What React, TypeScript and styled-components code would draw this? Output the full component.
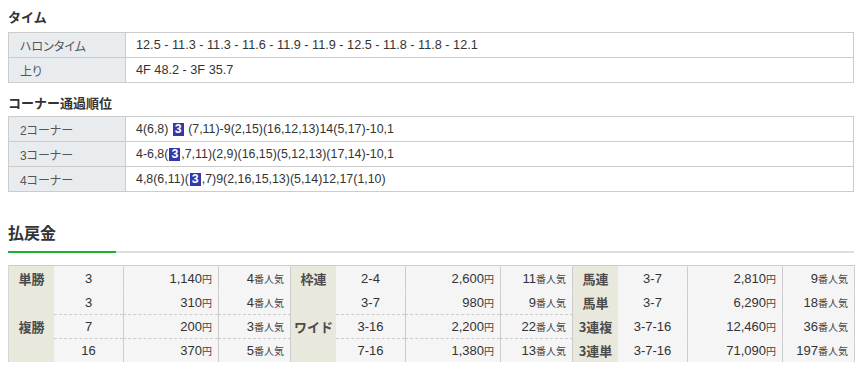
import styled, { createGlobalStyle } from "styled-components";

const GlobalStyle = createGlobalStyle`
  body {
    margin: 0;
    background: #fff;
    color: #333;
    font-family: "Liberation Sans", "Noto Sans CJK JP", sans-serif;
  }
`;

const Page = styled.div`
  width: 846px;
  padding: 8px 0 0 8px;
`;

const SectionTitle = styled.h3<{ $top?: number; $gap?: number }>`
  margin: ${(p) => p.$top ?? 0}px 0 ${(p) => p.$gap ?? 4}px;
  font-size: 13px;
  line-height: 20px;
  font-weight: bold;
  color: #333;
`;

const InfoTable = styled.table`
  width: 100%;
  border-collapse: collapse;
  table-layout: fixed;
  font-size: 12px;
`;

const InfoLabel = styled.th`
  width: 105px;
  height: 24px;
  padding: 0 0 0 11px;
  background: #e9ecef;
  border: 1px solid #ccc;
  text-align: left;
  font-weight: normal;
  color: #555;
  font-feature-settings: "palt";
`;

const InfoValue = styled.td<{ $size: number }>`
  height: 24px;
  padding: 0 0 0 10px;
  border: 1px solid #ccc;
  color: #333;
  font-size: ${(p) => p.$size}px;
  white-space: nowrap;
`;

const Badge = styled.span`
  display: inline-block;
  padding: 0 2px;
  margin: 0 1px;
  line-height: 13px;
  background: #3637a8;
  color: #fff;
  font-weight: bold;
`;

const PayTitle = styled.h2`
  margin: 31px 0 0;
  padding-bottom: 6px;
  font-size: 16px;
  line-height: 22px;
  font-weight: bold;
  color: #333;
`;

const Rule = styled.div`
  display: flex;
  height: 2px;
  background: #dedede;
`;

const RuleAccent = styled.div`
  width: 108px;
  background: #19b32b;
`;

const PayGrid = styled.div`
  display: grid;
  grid-template-columns: repeat(3, 1fr);
  margin-top: 12px;
  border-left: 1px solid #d6d6d6;
`;

const PayTable = styled.table`
  width: 100%;
  table-layout: fixed;
  border-collapse: separate;
  border-spacing: 0;
  border-top: 1px solid #ccc;
  font-size: 13px;
`;

const PayLabel = styled.th`
  padding: 0;
  background: #e8e8dd;
  border-top: 1px solid transparent;
  color: #4b4b4b;
  font-weight: bold;
  font-size: 13px;
  text-align: center;
  vertical-align: middle;
  font-family: "Noto Sans CJK JP", sans-serif;
`;

const PayCell = styled.td<{ $dashed?: boolean; $align: "center" | "right"; $line?: boolean; $last?: boolean }>`
  height: 23px;
  padding: 0 ${(p) => (p.$align === "right" ? 6 : 0)}px 0 0;
  background: #f5f5f5;
  border-top: 1px ${(p) => (p.$dashed ? "dashed #ccc" : "solid transparent")};
  border-left: ${(p) => (p.$line ? "1px solid #ccc" : "none")};
  border-right: ${(p) => (p.$last ? "1px solid #ccc" : "none")};
  text-align: ${(p) => p.$align};
  color: #333;
  white-space: nowrap;
`;

const Unit = styled.span`
  font-size: 10px;
  font-family: "Noto Sans CJK JP", sans-serif;
  color: #444;
`;

type PayRow = {
  label?: string;
  span?: number;
  num: string;
  yen: string;
  ninki: string;
  dashed?: boolean;
};

const payTables: PayRow[][] = [
  [
    { label: "単勝", num: "3", yen: "1,140", ninki: "4" },
    { label: "複勝", span: 3, num: "3", yen: "310", ninki: "4" },
    { num: "7", yen: "200", ninki: "3", dashed: true },
    { num: "16", yen: "370", ninki: "5", dashed: true },
  ],
  [
    { label: "枠連", num: "2-4", yen: "2,600", ninki: "11" },
    { label: "ワイド", span: 3, num: "3-7", yen: "980", ninki: "9" },
    { num: "3-16", yen: "2,200", ninki: "22", dashed: true },
    { num: "7-16", yen: "1,380", ninki: "13", dashed: true },
  ],
  [
    { label: "馬連", num: "3-7", yen: "2,810", ninki: "9" },
    { label: "馬単", num: "3-7", yen: "6,290", ninki: "18" },
    { label: "3連複", num: "3-7-16", yen: "12,460", ninki: "36" },
    { label: "3連単", num: "3-7-16", yen: "71,090", ninki: "197" },
  ],
];

const App = () => {
  return (
    <Page>
      <GlobalStyle />
      <SectionTitle>タイム</SectionTitle>
      <InfoTable>
        <tbody>
          <tr>
            <InfoLabel>ハロンタイム</InfoLabel>
            <InfoValue $size={12.7}>12.5 - 11.3 - 11.3 - 11.6 - 11.9 - 11.9 - 12.5 - 11.8 - 11.8 - 12.1</InfoValue>
          </tr>
          <tr>
            <InfoLabel>上り</InfoLabel>
            <InfoValue $size={12.7}>4F 48.2 - 3F 35.7</InfoValue>
          </tr>
        </tbody>
      </InfoTable>

      <SectionTitle $top={11} $gap={2}>コーナー通過順位</SectionTitle>
      <InfoTable>
        <tbody>
          <tr>
            <InfoLabel>2コーナー</InfoLabel>
            <InfoValue $size={12.4}>
              4(6,8) <Badge>3</Badge> (7,11)-9(2,15)(16,12,13)14(5,17)-10,1
            </InfoValue>
          </tr>
          <tr>
            <InfoLabel>3コーナー</InfoLabel>
            <InfoValue $size={12.4}>
              4-6,8(<Badge>3</Badge>,7,11)(2,9)(16,15)(5,12,13)(17,14)-10,1
            </InfoValue>
          </tr>
          <tr>
            <InfoLabel>4コーナー</InfoLabel>
            <InfoValue $size={12.4}>
              4,8(6,11)(<Badge>3</Badge>,7)9(2,16,15,13)(5,14)12,17(1,10)
            </InfoValue>
          </tr>
        </tbody>
      </InfoTable>

      <PayTitle>払戻金</PayTitle>
      <Rule>
        <RuleAccent />
      </Rule>

      <PayGrid>
        {payTables.map((rows, t) => (
          <PayTable key={t}>
            <colgroup>
              <col style={{ width: 45 }} />
              <col style={{ width: 69 }} />
              <col style={{ width: 95 }} />
              <col style={{ width: 73 }} />
            </colgroup>
            <tbody>
              {rows.map((r, i) => (
                <tr key={i}>
                  {r.label && <PayLabel rowSpan={r.span ?? 1}>{r.label}</PayLabel>}
                  <PayCell $align="center" $dashed={r.dashed}>{r.num}</PayCell>
                  <PayCell $align="right" $dashed={r.dashed} $line>
                    {r.yen}
                    <Unit>円</Unit>
                  </PayCell>
                  <PayCell $align="right" $dashed={r.dashed} $line $last>
                    {r.ninki}
                    <Unit>番人気</Unit>
                  </PayCell>
                </tr>
              ))}
            </tbody>
          </PayTable>
        ))}
      </PayGrid>
    </Page>
  );
};

export default App;
